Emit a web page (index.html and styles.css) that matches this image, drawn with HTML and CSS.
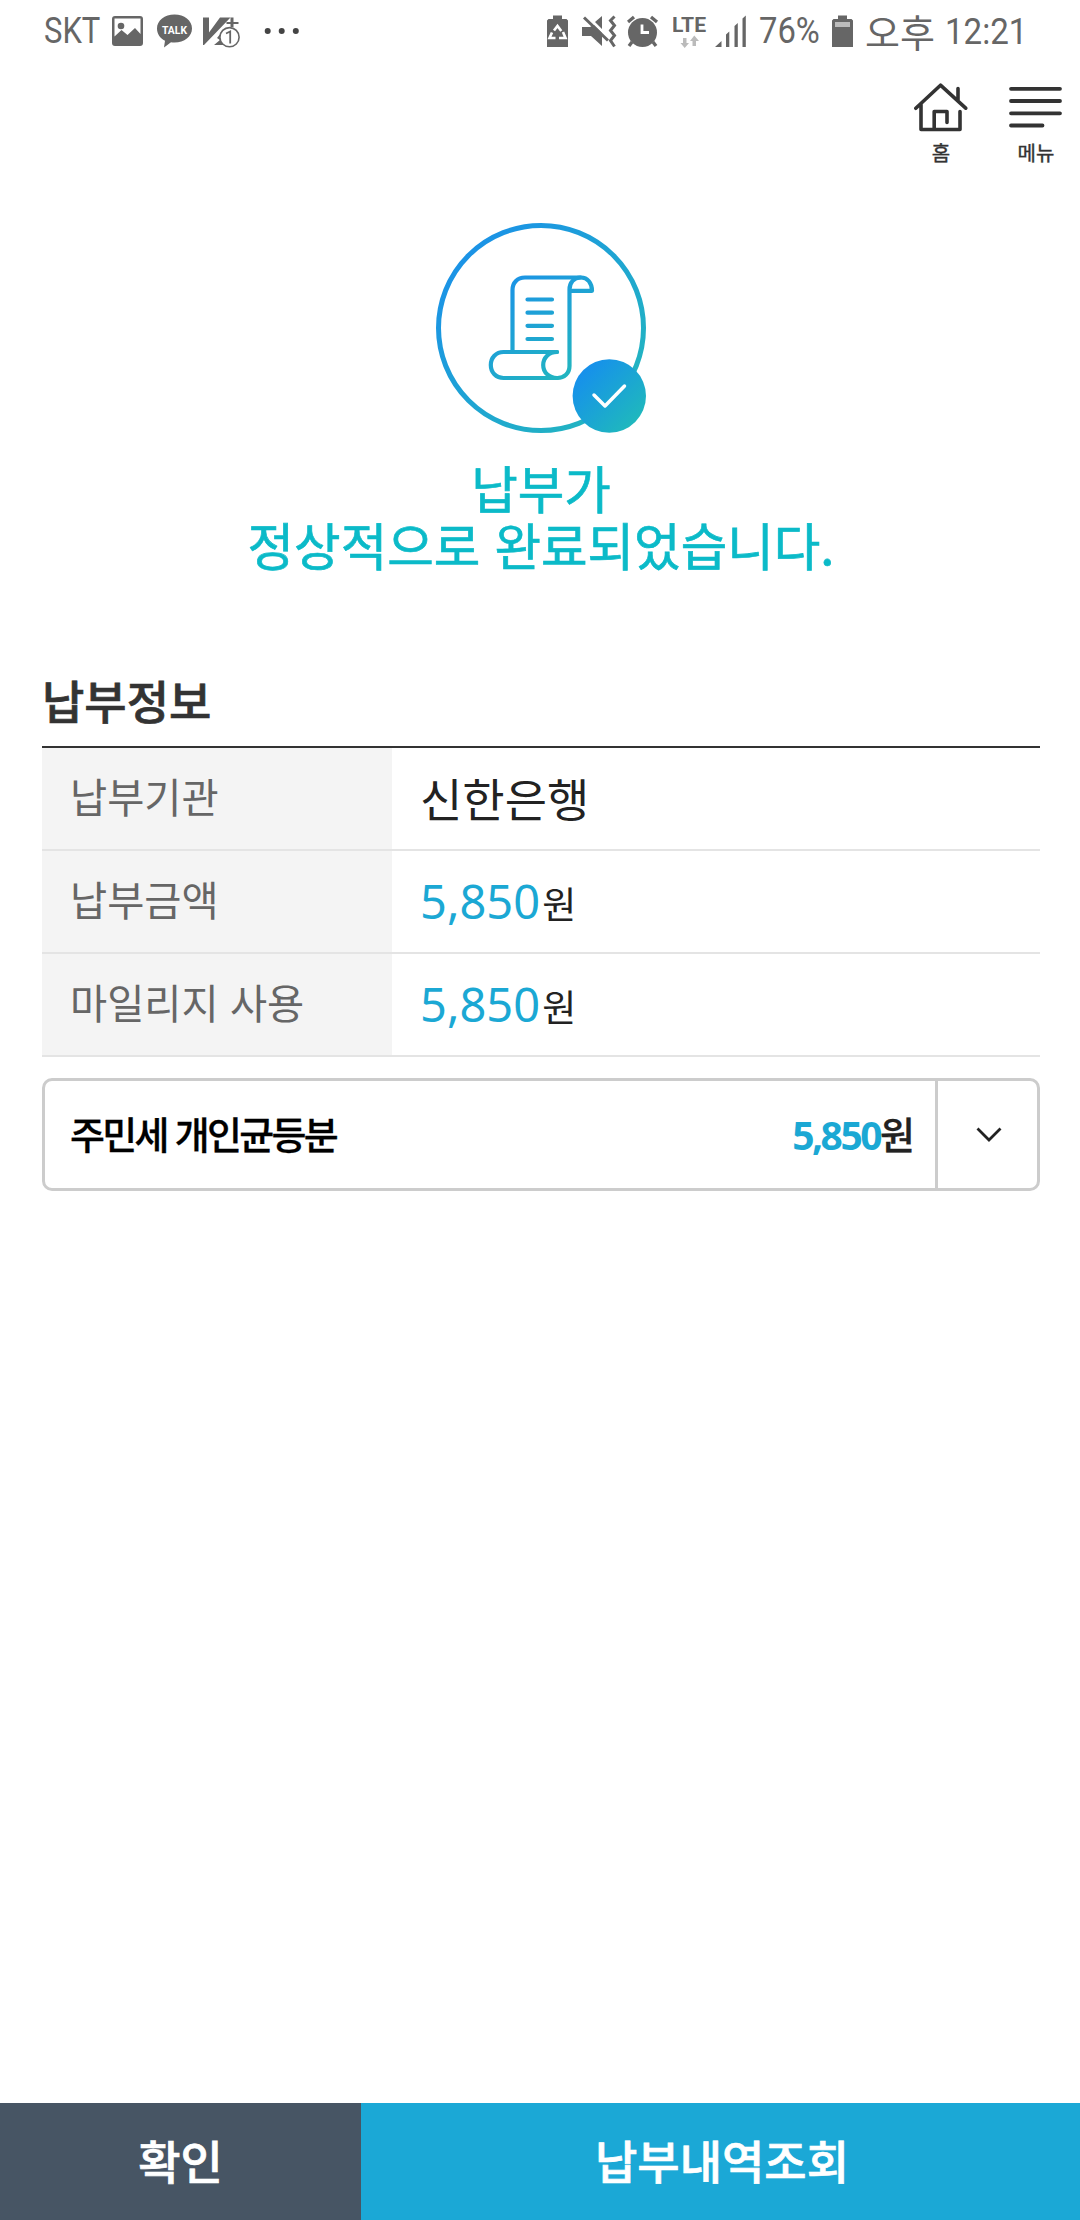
FILE: index.html
```html
<!DOCTYPE html>
<html lang="ko">
<head>
<meta charset="utf-8">
<title>납부 완료</title>
<link rel="stylesheet" href="styles.css">
</head>
<body>
<div class="screen">
  <div class="status">
    <div class="status-left">
      <span class="cond carrier"><span>SKT</span></span>
      <svg class="ic-picture" width="32" height="64" viewBox="112 0 32 64"><path fill-rule="evenodd" fill="#666" d="M115 16h25a3 3 0 0 1 3 3v24a3 3 0 0 1-3 3h-25a3 3 0 0 1-3-3V19a3 3 0 0 1 3-3zM114.500 18.500v18l7-6.500 6 5 7.500-7 5.500 6V18.500z"/><circle cx="121" cy="26" r="3.300" fill="#666"/></svg>
      <svg class="ic-talk" width="36" height="64" viewBox="157 0 36 64"><path fill="#666" d="M174.500 14.500c9.800 0 17.500 6 17.500 14s-7.700 14-17.500 14c-1.400 0-2.500-.1-3.500-.3l-7 5.300 1-6.800c-5-2.400-8-6.800-8-12.200 0-8 7.700-14 17.500-14z"/><text x="162" y="33.800" class="talk-text" textLength="25" lengthAdjust="spacingAndGlyphs">TALK</text></svg>
      <svg class="ic-v3" width="38" height="64" viewBox="203 0 38 64"><path fill="#666" d="M203 17.500h6v15l11-15h10.500L204 45h-1zM214 45l6-5-3-2 4-5h7v12zM230.500 17.500h3v4.500h5v2h-5v3h-3v-3h-4v-2h4z"/><circle cx="229.500" cy="37.200" r="9.600" fill="#fff" stroke="#666" stroke-width="1.600"/><path d="M226 33.500l4.200-2v12" fill="none" stroke="#666" stroke-width="1.800"/></svg>
      <svg class="ic-dots" width="36" height="64" viewBox="264 0 36 64" fill="#444"><circle cx="267.700" cy="31" r="3"/><circle cx="281.700" cy="31" r="3"/><circle cx="295.800" cy="31" r="3"/></svg>
    </div>
    <div class="status-right">
      <svg width="35" height="64" viewBox="547 0 35 64"><path fill="#666" d="M553 15.500h9V19h4.500l1.500 1.500V47h-21V20.500l1.500-1.500h4.500z"/><g fill="none" stroke="#fff" stroke-width="2.600"><path d="M554 30.500l3.500-4.500 3.800 5M552 32.500l-2.500 5.500h6M563 32l2.500 6h-6.500"/></g></svg>
      <svg width="45" height="64" viewBox="582 0 45 64" fill="#666"><path d="M582 27h8l4-2 8 8v13l-11-10h-9zM595 22l7-6v13z"/><path d="M584 17.500l24 23" stroke="#666" stroke-width="3"/><path d="M614.500 16.500l-4 4 4 5-4 5 4 5-4 5 4 6" fill="none" stroke="#666" stroke-width="3"/></svg>
      <svg width="46" height="64" viewBox="627 0 46 64"><circle cx="642.500" cy="32.500" r="14.500" fill="#666"/><path d="M628 22l6-5M651 17l6 5M632 42l-3 4M653 42l3 4" stroke="#666" stroke-width="3.300"/><path d="M642 24.500v8h7" fill="none" stroke="#fff" stroke-width="2.800"/></svg>
      <svg width="42" height="64" viewBox="673 0 42 64"><text class="lte-text" x="672" y="32" textLength="34" lengthAdjust="spacingAndGlyphs">LTE</text><path fill="#bbb" d="M683 38h3.500v5h2.500l-4.300 5-4.200-5h2.500zM692.500 46h3.500v-5h3l-4.700-5.500-4.300 5.500h2.500z"/></svg>
      <svg width="44" height="64" viewBox="715 0 44 64" fill="#666"><path d="M715 47l6.500-6v6zM726 34.500l3.300-3V47H726zM734.500 26l3.300-3V47h-3.300zM742.500 18.500l3.300-3V47h-3.300z"/></svg>
      <span class="cond percent"><span>76%</span></span>
      <svg width="33" height="64" viewBox="832 0 33 64"><path fill="#666" d="M838 15.500h9V19h4.500l1.500 1.500V47h-21V20.500l1.500-1.500h4.500z"/><path fill="#bbb" d="M835 22h15v5h-15z"/></svg>
      <span class="ampm">오후</span>
      <span class="cond clock"><span>12:21</span></span>
    </div>
  </div>

  <header class="topbar">
    <a class="nav">
      <svg width="54" height="50" viewBox="914 83 54 50" fill="none" stroke="#333" stroke-width="3.600" stroke-linecap="round" stroke-linejoin="round"><path d="M915.800 108.300L940.500 85.200l25.200 23M958 88.500V101M921 104.500V129.500h39V111.500M934.200 129v-17.500H947v11"/></svg>
      <span>홈</span>
    </a>
    <a class="nav">
      <svg width="54" height="50" viewBox="1009 83 54 50" stroke="#333" stroke-width="3.800" stroke-linecap="round"><path d="M1011 88.800h49M1011 101h49M1011 113.300h49M1011 125.500h31.500"/></svg>
      <span>메뉴</span>
    </a>
  </header>

  <section class="result">
    <svg width="212" height="212" viewBox="435 222 212 212" fill="none" stroke-linecap="round" stroke-linejoin="round">
      <defs>
        <linearGradient id="ring" gradientUnits="userSpaceOnUse" x1="465" y1="255" x2="615" y2="400"><stop offset="0" stop-color="#1b93e6"/><stop offset="1" stop-color="#22b4c1"/></linearGradient>
        <linearGradient id="paper" gradientUnits="userSpaceOnUse" x1="505" y1="280" x2="570" y2="370"><stop offset="0" stop-color="#1b93e6"/><stop offset="1" stop-color="#22b4c1"/></linearGradient>
        <linearGradient id="badge" gradientUnits="userSpaceOnUse" x1="583" y1="370" x2="636" y2="422"><stop offset="0" stop-color="#1690ec"/><stop offset="1" stop-color="#1fb8bd"/></linearGradient>
      </defs>
      <circle cx="541" cy="328" r="102.500" stroke="url(#ring)" stroke-width="5"/>
      <g stroke="url(#paper)" stroke-width="4.200">
        <path d="M512.500 350V290c0-7.500 5-12.500 12.500-12.500h56c6.500 0 11 5.500 11 13.300h-22"/>
        <path d="M580.500 277.500c-6.500 0-11 5-11 12V366c0 7.500-5.500 12-12 12H503.500c-7.500 0-12.700-5.500-12.700-13s5.200-13 12.700-13H557"/>
        <path d="M557 352c-8 0-13.800 5.500-13.800 13s5.800 13 13.800 13M527.500 299.500h24.500M527.500 312.700h24.500M527.500 325.800h24.500M527.500 339h24.500"/>
      </g>
      <circle cx="609.300" cy="396" r="36.700" fill="url(#badge)"/>
      <path d="M594 395l11 11 19.500-20" stroke="#fff" stroke-width="3.500"/>
    </svg>
    <h1>납부가<br>정상적으로 완료되었습니다.</h1>
  </section>

  <main class="info">
    <h2>납부정보</h2>
    <dl class="table">
      <div class="row"><dt>납부기관</dt><dd>신한은행</dd></div>
      <div class="row"><dt>납부금액</dt><dd class="money"><b>5,850</b><i>원</i></dd></div>
      <div class="row"><dt>마일리지 사용</dt><dd class="money"><b>5,850</b><i>원</i></dd></div>
    </dl>
    <div class="card">
      <span class="card-name">주민세 개인균등분</span>
      <span class="card-sum"><b>5,850</b>원</span>
      <span class="card-toggle"><svg width="26" height="16" viewBox="0 0 26 16" fill="none" stroke="#222" stroke-width="2.800"><path d="M1.500 1.500L13 13 24.500 1.500"/></svg></span>
    </div>
  </main>

  <footer class="actions">
    <button class="ok">확인</button>
    <button class="history">납부내역조회</button>
  </footer>
</div>
</body>
</html>
```
FILE: styles.css
```css
* { box-sizing: border-box; margin: 0; padding: 0; }
body { background: #fff; font-family: "Noto Sans CJK KR", sans-serif; color: #222; }
svg { display: block; flex: none; }
.screen { width: 1080px; height: 2220px; display: flex; flex-direction: column; }

.status { height: 64px; padding: 0 44px 0 44px; display: flex; color: #666; }
.status-left, .status-right { display: flex; }
.status-right { margin-left: 247px; }
.cond { font: 36px/63px Roboto, sans-serif; white-space: nowrap; }
.cond span { display: inline-block; transform-origin: 0 50%; }
.carrier { width: 68px; }
.carrier span { transform: scaleX(.86); }
.percent { width: 73px; }
.percent span { transform: scaleX(.91); }
.clock { line-height: 65px; }
.clock span { transform: scaleX(.92); }
.ampm { width: 80px; font-size: 38px; line-height: 61px; white-space: nowrap; }
.ic-talk { margin-left: 13px; }
.ic-v3 { margin-left: 10px; }
.ic-dots { margin-left: 23px; }
.talk-text { font: bold 11.5px Roboto, sans-serif; fill: #fff; }
.lte-text { font: bold 20px Roboto, sans-serif; fill: #666; }

.topbar { height: 158px; padding: 19px 17px 0 0; display: flex; justify-content: flex-end; gap: 41px; }
.nav { width: 54px; display: flex; flex-direction: column; align-items: center; }
.nav span { font-size: 20px; line-height: 30px; margin-top: 5px; color: #333; font-weight: 400; -webkit-text-stroke: .4px #333; white-space: nowrap; }

.result { height: 446px; display: flex; flex-direction: column; align-items: center; padding-left: 2px; }
h1 { margin-top: 25px; font-size: 50.600px; line-height: 57px; font-weight: 400; color: #0bbac8; text-align: center; -webkit-text-stroke: .7px #0bbac8; white-space: nowrap; }

.info { flex: 1; padding: 0 40px 0 42px; }
h2 { height: 78px; font-size: 46px; line-height: 62px; font-weight: 500; color: #333; -webkit-text-stroke: .7px #333; }
.table { border-top: 2px solid #333; }
.row { display: flex; height: 103px; border-bottom: 2px solid #e4e4e4; }
dt { width: 350px; height: 101px; padding-left: 28px; background: #f4f4f4; color: #666; font-size: 40.400px; line-height: 96px; }
dd { padding-left: 28px; font-size: 46px; line-height: 98px; }
.money { display: flex; align-items: baseline; }
.money b { font: 47px/101px "Noto Sans", sans-serif; color: #1ba8d4; }
.money i { font-style: normal; font-size: 37px; margin-left: 2px; }
.card { height: 113px; margin-top: 21px; border: 3px solid #ccc; border-radius: 10px; display: flex; line-height: 104px; font-size: 38px; font-weight: 500; }
.card-name { flex: 1; padding-left: 25px; color: #000; letter-spacing: -2.7px; -webkit-text-stroke: .3px #000; }
.card-sum { display: flex; padding-right: 22px; letter-spacing: -2px; -webkit-text-stroke: .3px #222; }
.card-sum b { font: bold 39px/107px "Noto Sans", sans-serif; color: #1ba8d4; letter-spacing: -2.500px; -webkit-text-stroke: 0; }
.card-toggle { width: 102px; border-left: 3px solid #ccc; display: flex; align-items: center; justify-content: center; padding-left: 2px; }

.actions { height: 117px; display: flex; }
.actions button { border: 0; color: #fff; font: 500 46px/112px "Noto Sans CJK KR", sans-serif; padding-bottom: 5px; -webkit-text-stroke: .7px #fff; }
.ok { width: 361px; background: #475564; }
.history { flex: 1; padding-left: 3px; background: #1ba8d6; }
```
